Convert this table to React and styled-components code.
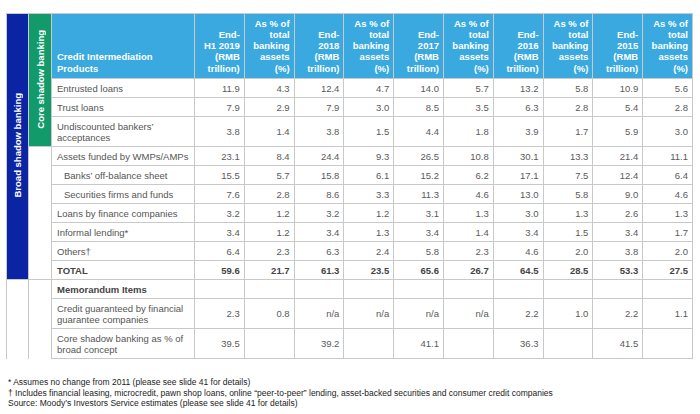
import React from 'react';
import styled, { createGlobalStyle } from 'styled-components';

const GlobalStyle = createGlobalStyle`
    body {
        margin: 0;
        background: #ffffff;
        font-family: "Liberation Sans", Arial, sans-serif;
    }
`;

const Page = styled.div`
    padding: 13px 0 0 6px;
    width: 700px;
    height: 414px;
    box-sizing: border-box;
`;

const Table = styled.table`
    border-collapse: collapse;
    table-layout: fixed;
    width: 687px;
    font-size: 9.5px;
    line-height: 11px;
    color: #555555;
`;

const HeadCell = styled.th`
    background: #3aa9df;
    color: #ffffff;
    font-weight: bold;
    text-align: ${props => props.$left ? 'left' : 'right'};
    vertical-align: bottom;
    line-height: 11.3px;
    padding: 3px 4px 4px ${props => props.$left ? '5px' : '4px'};
    border: 1px solid #c9c9c9;
    height: 57px;
`;

const BandCell = styled.td`
    background: ${props => props.$color || '#ffffff'};
    border: 1px solid #c9c9c9;
    border-bottom: ${props => props.$color ? '1px solid #c9c9c9' : 'none'};
    padding: 0;
    text-align: center;
    vertical-align: middle;
`;

const BandText = styled.span`
    display: inline-block;
    writing-mode: vertical-rl;
    transform: rotate(180deg);
    color: #ffffff;
    font-weight: bold;
    font-size: 9.5px;
    line-height: 11px;
    white-space: nowrap;
`;

const LabelCell = styled.td`
    border: 1px solid #c9c9c9;
    padding: 3.5px 4px 3.5px ${props => props.$indent ? '12px' : '5px'};
    text-align: left;
    vertical-align: middle;
    font-weight: ${props => props.$bold ? 'bold' : 'normal'};
    color: ${props => props.$bold ? '#444444' : '#555555'};
`;

const NumCell = styled.td`
    border: 1px solid #c9c9c9;
    padding: 3.5px 4px;
    text-align: right;
    vertical-align: middle;
    font-weight: ${props => props.$bold ? 'bold' : 'normal'};
    color: ${props => props.$bold ? '#444444' : '#5a5a5a'};
`;

const Notes = styled.div`
    margin-top: 18px;
    padding-left: 2px;
    font-size: 8.5px;
    line-height: 10.7px;
    color: #222222;
`;

const heads = [
    ['End-', 'H1 2019', '(RMB', 'trillion)'],
    ['As % of', 'total', 'banking', 'assets', '(%)'],
    ['End-', '2018', '(RMB', 'trillion)'],
    ['As % of', 'total', 'banking', 'assets', '(%)'],
    ['End-', '2017', '(RMB', 'trillion)'],
    ['As % of', 'total', 'banking', 'assets', '(%)'],
    ['End-', '2016', '(RMB', 'trillion)'],
    ['As % of', 'total', 'banking', 'assets', '(%)'],
    ['End-', '2015', '(RMB', 'trillion)'],
    ['As % of', 'total', 'banking', 'assets', '(%)'],
];

const core = [
    { label: 'Entrusted loans', values: ['11.9', '4.3', '12.4', '4.7', '14.0', '5.7', '13.2', '5.8', '10.9', '5.6'] },
    { label: 'Trust loans', values: ['7.9', '2.9', '7.9', '3.0', '8.5', '3.5', '6.3', '2.8', '5.4', '2.8'] },
    { label: 'Undiscounted bankers\u2019 acceptances', values: ['3.8', '1.4', '3.8', '1.5', '4.4', '1.8', '3.9', '1.7', '5.9', '3.0'] },
];

const broad = [
    { label: 'Assets funded by WMPs/AMPs', values: ['23.1', '8.4', '24.4', '9.3', '26.5', '10.8', '30.1', '13.3', '21.4', '11.1'] },
    { label: 'Banks\u2019 off-balance sheet', indent: true, values: ['15.5', '5.7', '15.8', '6.1', '15.2', '6.2', '17.1', '7.5', '12.4', '6.4'] },
    { label: 'Securities firms and funds', indent: true, values: ['7.6', '2.8', '8.6', '3.3', '11.3', '4.6', '13.0', '5.8', '9.0', '4.6'] },
    { label: 'Loans by finance companies', values: ['3.2', '1.2', '3.2', '1.2', '3.1', '1.3', '3.0', '1.3', '2.6', '1.3'] },
    { label: 'Informal lending*', values: ['3.4', '1.2', '3.4', '1.3', '3.4', '1.4', '3.4', '1.5', '3.4', '1.7'] },
    { label: 'Others\u2020', values: ['6.4', '2.3', '6.3', '2.4', '5.8', '2.3', '4.6', '2.0', '3.8', '2.0'] },
    { label: 'TOTAL', bold: true, values: ['59.6', '21.7', '61.3', '23.5', '65.6', '26.7', '64.5', '28.5', '53.3', '27.5'] },
];

const memo = [
    { label: 'Memorandum Items', bold: true, values: ['', '', '', '', '', '', '', '', '', ''] },
    { label: 'Credit guaranteed by financial guarantee companies', values: ['2.3', '0.8', 'n/a', 'n/a', 'n/a', 'n/a', '2.2', '1.0', '2.2', '1.1'] },
    { label: 'Core shadow banking as % of broad concept', values: ['39.5', '', '39.2', '', '41.1', '', '36.3', '', '41.5', ''] },
];

const Cells = ({ row }) => (
    <React.Fragment>
        <LabelCell $indent={row.indent} $bold={row.bold}>{row.label}</LabelCell>
        {row.values.map((v, i) => (
            <NumCell key={i} $bold={row.bold}>{v}</NumCell>
        ))}
    </React.Fragment>
);

const App = () => {
    return (
        <Page>
            <GlobalStyle />
            <Table>
                <colgroup>
                    <col style={{ width: 22 }} />
                    <col style={{ width: 23 }} />
                    <col style={{ width: 143 }} />
                    {heads.map((_, i) => <col key={i} />)}
                </colgroup>
                <tbody>
                    <tr>
                        <BandCell rowSpan={11} $color="#0b24a3">
                            <BandText>Broad shadow banking</BandText>
                        </BandCell>
                        <BandCell rowSpan={4} $color="#139a6b">
                            <BandText>Core shadow banking</BandText>
                        </BandCell>
                        <HeadCell $left>Credit Intermediation<br />Products</HeadCell>
                        {heads.map((lines, i) => (
                            <HeadCell key={i}>
                                {lines.map((l, j) => (
                                    <React.Fragment key={j}>{j > 0 && <br />}{l}</React.Fragment>
                                ))}
                            </HeadCell>
                        ))}
                    </tr>
                    {core.map((row, i) => (
                        <tr key={row.label}><Cells row={row} /></tr>
                    ))}
                    {broad.map((row, i) => (
                        <tr key={row.label}>
                            {i === 0 && <BandCell rowSpan={broad.length} />}
                            <Cells row={row} />
                        </tr>
                    ))}
                    {memo.map((row, i) => (
                        <tr key={row.label}>
                            {i === 0 && <BandCell rowSpan={memo.length} />}
                            {i === 0 && <BandCell rowSpan={memo.length} />}
                            <Cells row={row} />
                        </tr>
                    ))}
                </tbody>
            </Table>
            <Notes>
                * Assumes no change from 2011 (please see slide 41 for details)<br />
                {'\u2020'} Includes financial leasing, microcredit, pawn shop loans, online {'\u201Cpeer-to-peer\u201D'} lending, asset-backed securities and consumer credit companies<br />
                Source: Moody{'\u2019'}s Investors Service estimates (please see slide 41 for details)
            </Notes>
        </Page>
    );
};

export default App;
